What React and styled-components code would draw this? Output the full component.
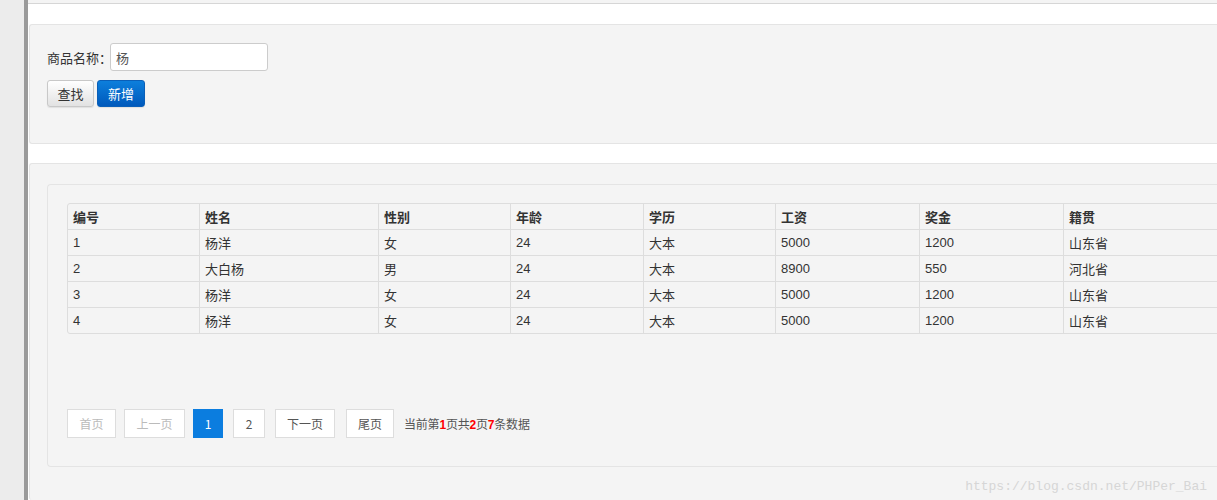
import React from "react";
import styled, { createGlobalStyle } from "styled-components";

const GlobalStyle = createGlobalStyle`
  html, body {
    margin: 0;
    padding: 0;
    background: #ffffff;
  }
  body {
    font-family: "Liberation Sans", "Noto Sans CJK SC", sans-serif;
    font-size: 13px;
    color: #333;
  }
`;

const columns = [
    { title: "编号", width: 131 },
    { title: "姓名", width: 179 },
    { title: "性别", width: 132 },
    { title: "年龄", width: 133 },
    { title: "学历", width: 132 },
    { title: "工资", width: 144 },
    { title: "奖金", width: 144 },
    { title: "籍贯", width: 200 },
];

const rows = [
    ["1", "杨洋", "女", "24", "大本", "5000", "1200", "山东省"],
    ["2", "大白杨", "男", "24", "大本", "8900", "550", "河北省"],
    ["3", "杨洋", "女", "24", "大本", "5000", "1200", "山东省"],
    ["4", "杨洋", "女", "24", "大本", "5000", "1200", "山东省"],
];

class App extends React.Component {

    state = {
        keyword: "杨"
    }

    handleChange = (event) => {
        this.setState({ keyword: event.target.value });
    };

    render() {
        return (
            <Page>
                <GlobalStyle />
                <Sidebar />
                <Main>
                    <TopBar />
                    <Panel>
                        <SearchRow>
                            <Label>商品名称：</Label>
                            <Input type="text" value={this.state.keyword} onChange={this.handleChange} />
                        </SearchRow>
                        <ButtonRow>
                            <Button>查找</Button>
                            <Button primary>新增</Button>
                        </ButtonRow>
                    </Panel>
                    <Panel grow>
                        <Box>
                            <Table>
                                <colgroup>
                                    {columns.map(c => <col key={c.title} style={{ width: c.width }} />)}
                                </colgroup>
                                <thead>
                                    <tr>
                                        {columns.map(c => <Th key={c.title}>{c.title}</Th>)}
                                    </tr>
                                </thead>
                                <tbody>
                                    {rows.map((r, i) =>
                                        <tr key={i}>
                                            {r.map((cell, j) => <Td key={j}>{cell}</Td>)}
                                        </tr>
                                    )}
                                </tbody>
                            </Table>
                            <Pager>
                                <PageButton disabled w={49}>首页</PageButton>
                                <PageButton disabled w={61}>上一页</PageButton>
                                <PageButton active w={30}>1</PageButton>
                                <PageButton w={32}>2</PageButton>
                                <PageButton w={60}>下一页</PageButton>
                                <PageButton w={48}>尾页</PageButton>
                                <PageInfo>
                                    当前第<Red>1</Red>页共<Red>2</Red>页<Red>7</Red>条数据
                                </PageInfo>
                            </Pager>
                        </Box>
                        <Watermark>https://blog.csdn.net/PHPer_Bai</Watermark>
                    </Panel>
                </Main>
            </Page>
        )
    }
}

const Page = styled.div`
  display: flex;
  width: 1217px;
  height: 500px;
  overflow: hidden;
`;

const Sidebar = styled.div`
  width: 24px;
  flex: none;
  background: #ececec;
  border-right: 4px solid #9a9a9a;
  box-shadow: 1px 0 0 #cfcfcf;
`;

const Main = styled.div`
  flex: 1;
  display: flex;
  flex-direction: column;
  gap: 20px;
  background: #ffffff;
  overflow: hidden;
`;

const TopBar = styled.div`
  height: 3px;
  border-bottom: 1px solid #d6d6d6;
  background: #f4f4f4;
`;

const Panel = styled.div`
  position: relative;
  background: #f4f4f4;
  border: 1px solid #e4e4e4;
  border-right: none;
  border-radius: 3px 0 0 3px;
  margin-left: 1px;
  padding: ${p => p.grow ? "20px 0 0 17px" : "18px 0 36px 17px"};
  flex: ${p => p.grow ? "1" : "none"};
  ${p => p.grow && "border-bottom: none; margin-top: -1px;"}
`;

const SearchRow = styled.div`
  display: flex;
  align-items: center;
`;

const Label = styled.span`
  font-family: "Noto Sans CJK SC", sans-serif;
  font-size: 13px;
  color: #333;
  white-space: nowrap;
  width: 63px;
  flex: none;
`;

const Input = styled.input`
  width: 146px;
  height: 26px;
  padding: 0 5px;
  border: 1px solid #cccccc;
  border-radius: 3px;
  background: #fff;
  font-family: "Noto Sans CJK SC", sans-serif;
  font-size: 13px;
  color: #555;
  outline: none;
`;

const ButtonRow = styled.div`
  display: flex;
  gap: 3px;
  margin-top: 9px;
`;

const Button = styled.button`
  box-sizing: border-box;
  width: ${p => p.primary ? "48px" : "47px"};
  height: 27px;
  padding: 0;
  border-radius: 3px;
  font-family: "Noto Sans CJK SC", sans-serif;
  font-size: 13px;
  color: ${p => p.primary ? "#fff" : "#333"};
  border: 1px solid ${p => p.primary ? "#0a5fb8" : "#c8c8c8"};
  background: ${p => p.primary
    ? "linear-gradient(#0c7fdc, #0059bc)"
    : "linear-gradient(#ffffff, #e2e2e2)"};
  box-shadow: 0 1px 1px rgba(0,0,0,0.08);
`;

const Box = styled.div`
  height: 263px;
  border: 1px solid #e4e4e4;
  border-right: none;
  border-radius: 4px 0 0 4px;
  padding: 18px 0 0 19px;
`;

const Table = styled.table`
  border-collapse: separate;
  border-spacing: 0;
  table-layout: fixed;
  width: 1195px;
  border: 1px solid #dddddd;
  border-radius: 3px;
  font-family: "Liberation Sans", "Noto Sans CJK SC", sans-serif;
  font-size: 13px;
`;

const Th = styled.th`
  height: 25px;
  padding: 0 5px;
  text-align: left;
  font-weight: bold;
  color: #333;
  border-left: 1px solid #dddddd;
  &:first-child { border-left: none; }
`;

const Td = styled.td`
  height: 25px;
  padding: 0 5px;
  color: #333;
  border-top: 1px solid #dddddd;
  border-left: 1px solid #dddddd;
  &:first-child { border-left: none; }
`;

const Pager = styled.div`
  display: flex;
  align-items: center;
  margin-top: 75px;
`;

const PageButton = styled.span`
  display: flex;
  align-items: center;
  justify-content: center;
  box-sizing: border-box;
  width: ${p => p.w}px;
  height: 29px;
  margin-right: ${p => p.active ? 10 : p.w === 32 ? 10 : p.w === 60 ? 11 : 8}px;
  border: 1px solid ${p => p.active ? "#0b7ddf" : "#dddddd"};
  background: ${p => p.active ? "#0b7ddf" : "#ffffff"};
  color: ${p => p.active ? "#ffffff" : p.disabled ? "#bbbbbb" : "#555555"};
  font-family: "Noto Sans CJK SC", sans-serif;
  font-size: 12px;
`;

const PageInfo = styled.span`
  margin-left: 2px;
  font-family: "Noto Sans CJK SC", sans-serif;
  font-size: 12px;
  letter-spacing: -0.2px;
  color: #555;
`;

const Red = styled.b`
  color: #ff0000;
  font-family: "Liberation Sans", sans-serif;
`;

const Watermark = styled.div`
  position: absolute;
  right: 10px;
  bottom: 6px;
  font-family: "Liberation Mono", monospace;
  font-size: 13px;
  color: #d6d6d6;
`;

export default App;
